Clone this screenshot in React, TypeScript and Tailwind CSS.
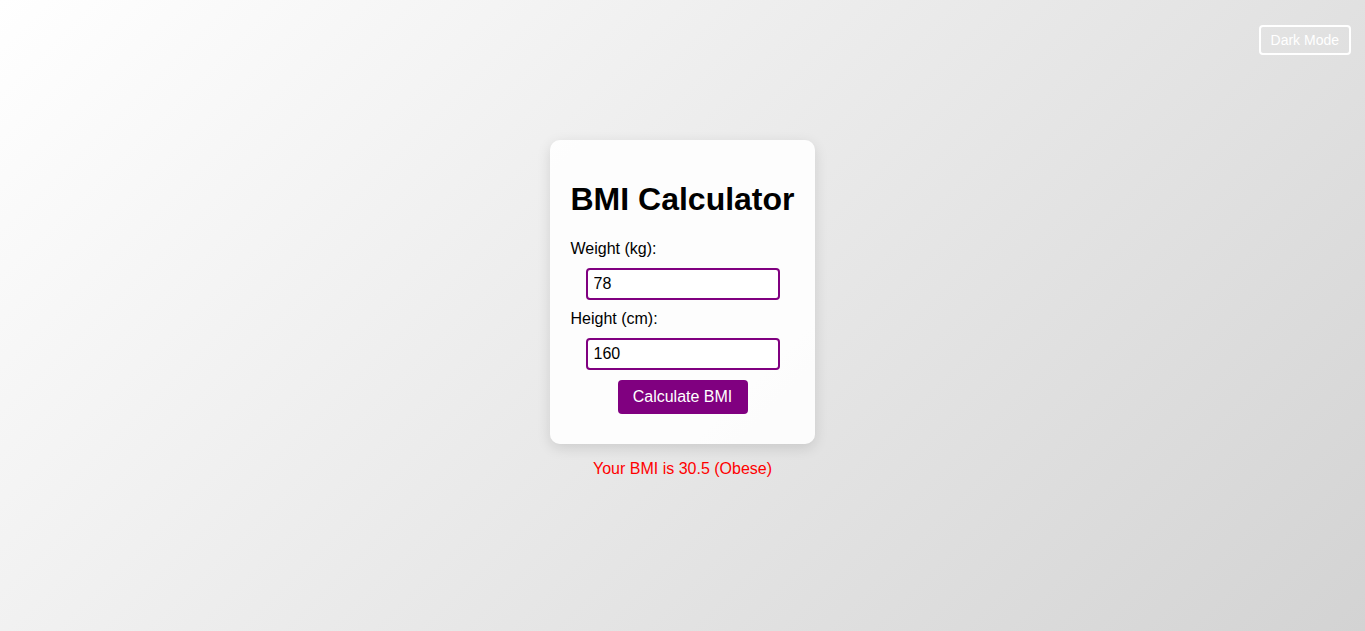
import { useState } from "react";

export default function App() {
  const [weight, setWeight] = useState("78");
  const [height, setHeight] = useState("160");
  const [result, setResult] = useState("Your BMI is 30.5 (Obese)");

  const calculate = () => {
    const w = parseFloat(weight);
    const h = parseFloat(height) / 100;
    if (!w || !h) return;
    const bmi = w / (h * h);
    let label = "Normal";
    if (bmi < 18.5) label = "Underweight";
    else if (bmi >= 30) label = "Obese";
    else if (bmi >= 25) label = "Overweight";
    setResult(`Your BMI is ${bmi.toFixed(1)} (${label})`);
  };

  return (
    <div className="relative flex h-screen flex-col items-center justify-center bg-[linear-gradient(135deg,#ffffff,#d3d3d3)] font-['Liberation_Sans',Arial,sans-serif] text-black">
      {/* Theme toggle */}
      <button
        type="button"
        className="absolute right-[14px] top-[25px] rounded-[4px] border-2 border-white bg-transparent px-[10px] py-[5px] text-sm leading-[16px] text-white"
      >
        Dark Mode
      </button>

      <div className="mt-[2px] rounded-[10px] bg-white/90 p-5 shadow-[0_4px_14px_rgba(0,0,0,0.12)]">
        <h1 className="my-[21.5px] text-[32px] font-bold leading-[37px]">BMI Calculator</h1>
        <label className="block text-base leading-[18px]">Weight (kg):</label>
        <input
          value={weight}
          onChange={(e) => setWeight(e.target.value)}
          className="mx-auto my-[10px] block h-[32px] w-[194px] rounded-[4px] border-2 border-[#800080] bg-white px-[6px] text-base leading-[18px] outline-none"
        />
        <label className="block text-base leading-[18px]">Height (cm):</label>
        <input
          value={height}
          onChange={(e) => setHeight(e.target.value)}
          className="mx-auto my-[10px] block h-[32px] w-[194px] rounded-[4px] border-2 border-[#800080] bg-white px-[6px] text-base leading-[18px] outline-none"
        />
        <button
          type="button"
          onClick={calculate}
          className="mx-auto my-[10px] block h-[34px] w-[130px] rounded-[4px] bg-[#800080] text-base leading-[18px] text-white"
        >
          Calculate BMI
        </button>
      </div>

      <p className="my-4 text-base leading-[18px] text-[#ff0000]">{result}</p>
    </div>
  );
}
